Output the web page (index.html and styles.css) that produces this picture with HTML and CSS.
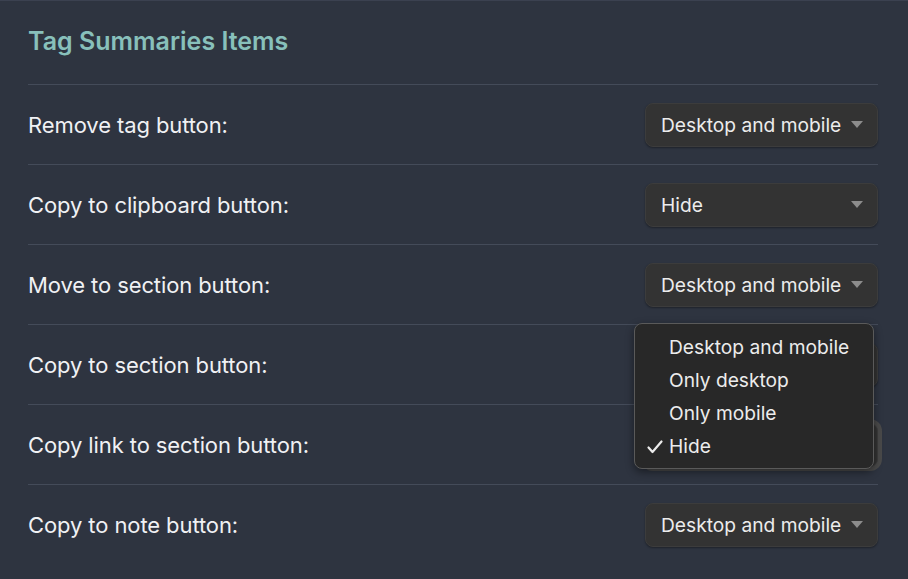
FILE: index.html
```html
<!DOCTYPE html>
<html>
<head>
<meta charset="utf-8">
<link rel="stylesheet" href="styles.css">
</head>
<body>
<div class="page">
  <h2 class="title">Tag Summaries Items</h2>
  <div class="row">
    <span class="label">Remove tag button:</span>
    <div class="select"><span>Desktop and mobile</span><i class="caret"></i></div>
  </div>
  <div class="row">
    <span class="label">Copy to clipboard button:</span>
    <div class="select"><span>Hide</span><i class="caret"></i></div>
  </div>
  <div class="row">
    <span class="label">Move to section button:</span>
    <div class="select"><span>Desktop and mobile</span><i class="caret"></i></div>
  </div>
  <div class="row">
    <span class="label">Copy to section button:</span>
    <div class="select"><span>Desktop and mobile</span><i class="caret"></i></div>
  </div>
  <div class="row">
    <span class="label">Copy link to section button:</span>
    <div class="select focused"><span>Hide</span><i class="caret"></i></div>
  </div>
  <div class="row">
    <span class="label">Copy to note button:</span>
    <div class="select"><span>Desktop and mobile</span><i class="caret"></i></div>
  </div>
  <ul class="menu">
    <li>Desktop and mobile</li>
    <li>Only desktop</li>
    <li>Only mobile</li>
    <li class="checked"><svg class="check" width="16" height="14" viewBox="0 0 16 14"><polyline points="1.5,7.5 5.5,12 14.5,1.5" fill="none" stroke="#ececec" stroke-width="2.2" stroke-linecap="round" stroke-linejoin="round"/></svg>Hide</li>
  </ul>
</div>
</body>
</html>
```

FILE: styles.css
```css
html, body {
  margin: 0;
  padding: 0;
  background: #2e3440;
  height: 100%;
}
body {
  font-family: Inter, "Noto Sans", sans-serif;
  color: #eceef2;
  border-top: 1px solid #3b4150;
  box-sizing: border-box;
}
.page {
  position: relative;
  padding: 0 30px 0 28px;
}
.title {
  margin: 0;
  height: 83px;
  box-sizing: border-box;
  padding-top: 25px;
  font-size: 25px;
  line-height: 30px;
  font-weight: 600;
  color: #88c0bb;
  letter-spacing: 0;
}
.row {
  height: 80px;
  box-sizing: border-box;
  border-top: 1px solid #444b59;
  display: flex;
  align-items: center;
  justify-content: space-between;
}
.label {
  font-size: 22px;
  letter-spacing: -0.1px;
  color: #f0f1f4;
}
.select {
  width: 233px;
  height: 44px;
  box-sizing: border-box;
  border-radius: 8px;
  background: #333333;
  border: 1px solid #3c3c3c;
  box-shadow: 0 1px 2px rgba(0,0,0,0.35);
  display: flex;
  align-items: center;
  justify-content: space-between;
  padding: 0 14px 0 15px;
  font-size: 19.2px;
  color: #ececec;
}
.select.focused {
  box-shadow: 0 0 0 4px #4a4a4a;
}
.caret {
  width: 0;
  height: 0;
  border-left: 6px solid transparent;
  border-right: 6px solid transparent;
  border-top: 7px solid #8c8c8c;
}
.menu {
  position: absolute;
  left: 634px;
  top: 322px;
  width: 240px;
  height: 146px;
  box-sizing: border-box;
  margin: 0;
  padding: 7px 0 0 0;
  list-style: none;
  background: #282828;
  border: 1px solid #5a5a5a;
  border-radius: 8px;
  box-shadow: 0 3px 8px rgba(0,0,0,0.45);
}
.menu li {
  height: 33px;
  line-height: 33px;
  padding-left: 34px;
  font-size: 19.2px;
  color: #ececec;
  position: relative;
}
.check {
  position: absolute;
  left: 12px;
  top: 10px;
}
```
